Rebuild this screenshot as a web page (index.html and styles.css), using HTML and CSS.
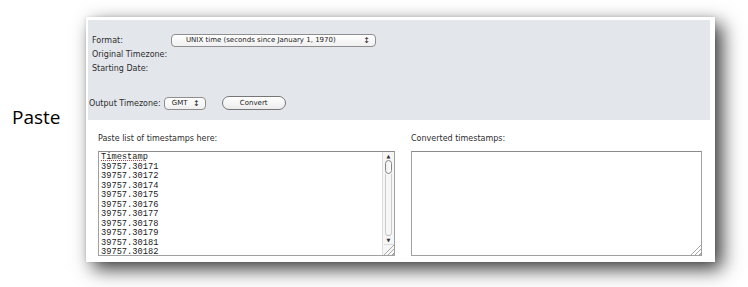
FILE: index.html
```html
<!DOCTYPE html>
<html lang="en">
<head>
  <meta charset="UTF-8">
  <title>Timestamp Converter</title>
  <link rel="stylesheet" href="styles.css">
</head>
<body>
  <div class="page">
    <div class="side">Paste</div>

    <div class="shot">
      <div class="options">
        <div class="row">
          <span class="lbl">Format:</span>
          <span class="select wide">UNIX time (seconds since January 1, 1970)<span class="arrows">&#x2195;</span></span>
        </div>
        <div class="row"><span class="lbl">Original Timezone:</span></div>
        <div class="row"><span class="lbl">Starting Date:</span></div>
        <div class="row out">
          <span>Output Timezone:</span>
          <span class="select small">GMT<span class="arrows">&#x2195;</span></span>
          <span class="btn">Convert</span>
        </div>
      </div>

      <div class="io">
        <div class="col left">
          <div class="cap">Paste list of timestamps here:</div>
          <div class="box">
            <div class="lines">
              <div class="spell">Timestamp</div>
              <div>39757.30171</div>
              <div>39757.30172</div>
              <div>39757.30174</div>
              <div>39757.30175</div>
              <div>39757.30176</div>
              <div>39757.30177</div>
              <div>39757.30178</div>
              <div>39757.30179</div>
              <div>39757.30181</div>
              <div>39757.30182</div>
            </div>
            <div class="scroll">
              <span class="arr">&#9650;</span>
              <span class="thumb"></span>
              <span class="track"></span>
              <span class="arr">&#9660;</span>
              <span class="grip"></span>
            </div>
          </div>
        </div>
        <div class="col right">
          <div class="cap">Converted timestamps:</div>
          <div class="box empty">
            <span class="grip"></span>
          </div>
        </div>
      </div>
    </div>
  </div>
</body>
</html>
```

FILE: styles.css
```css
body {
  margin: 0;
  background: #fff;
  font-family: "DejaVu Sans", sans-serif;
}

.page {
  display: flex;
  align-items: flex-start;
  width: 748px;
  height: 287px;
  overflow: hidden;
}

.side {
  width: 86px;
  padding: 104px 0 0 12px;
  box-sizing: border-box;
  font-family: "Open Sans", sans-serif;
  font-size: 19px;
  color: #000;
}

.shot {
  margin-top: 17px;
  width: 629px;
  height: 245px;
  background: #fff;
  box-shadow: 7px 7px 18px rgba(0, 0, 0, 0.78), 0 0 3px rgba(0, 0, 0, 0.12);
  padding: 3px 5px 0 2px;
  box-sizing: border-box;
}

.options {
  background: #e3e7eb;
  height: 100px;
  padding: 13px 0 0 4px;
  box-sizing: border-box;
  font-size: 8px;
  color: #2e2e2e;
}

.row {
  display: flex;
  align-items: center;
  height: 14px;
}

.lbl {
  width: 79px;
}

.row.out {
  margin: 21px 0 0 -3px;
  gap: 3px;
}

.select {
  position: relative;
  display: inline-flex;
  align-items: center;
  height: 13px;
  box-sizing: border-box;
  border: 1px solid #8e8e8e;
  border-radius: 4px;
  background: linear-gradient(#fff, #f0f0f0);
  font-size: 7px;
  color: #1a1a1a;
  padding-left: 14px;
}

.select.wide {
  width: 205px;
}

.select.small {
  width: 42px;
  padding-left: 7px;
}

.arrows {
  position: absolute;
  right: 5px;
  top: 0;
  font-size: 8px;
  line-height: 11px;
}

.btn {
  margin-left: 13px;
  width: 64px;
  height: 14px;
  box-sizing: border-box;
  border: 1px solid #777;
  border-radius: 7px;
  background: linear-gradient(#fff, #ececec);
  text-align: center;
  font-size: 7px;
  line-height: 12px;
  color: #1a1a1a;
}

.io {
  display: flex;
  gap: 16px;
  padding: 14px 0 0 10px;
}

.cap {
  font-size: 8px;
  color: #2e2e2e;
  height: 10px;
  line-height: 10px;
  margin-bottom: 7px;
}

.left {
  width: 297px;
}

.right {
  width: 291px;
}

.box {
  position: relative;
  height: 105px;
  border: 1px solid #a0a0a0;
  border-top-color: #8a8a8a;
  box-sizing: border-box;
  background: #fff;
  display: flex;
}

.lines {
  flex: 1;
  padding: 1px 0 0 2px;
  font-family: "Liberation Mono", monospace;
  font-size: 8.7px;
  line-height: 9.5px;
  color: #1a1a1a;
}

.spell {
  text-decoration: underline dotted #e03030;
  text-underline-offset: 1px;
}

.scroll {
  width: 11px;
  display: flex;
  flex-direction: column;
  align-items: center;
  border-left: 1px solid #ddd;
  background: #f6f6f6;
}

.arr {
  font-size: 5px;
  line-height: 8px;
  color: #333;
}

.thumb {
  width: 7px;
  height: 14px;
  border: 1px solid #888;
  border-radius: 4px;
  background: linear-gradient(90deg, #eee, #fff);
  box-sizing: border-box;
}

.track {
  flex: 1;
  width: 7px;
  border-left: 1px solid #ccc;
  border-right: 1px solid #ccc;
  border-bottom: 1px solid #bbb;
  border-radius: 0 0 4px 4px;
  box-sizing: border-box;
}

.scroll .arr:last-of-type {
  margin-bottom: 1px;
}

.grip {
  width: 10px;
  height: 10px;
  border-top: 1px solid #ddd;
  background: linear-gradient(135deg, transparent 45%, #aaa 46%, #aaa 52%, transparent 53%, transparent 65%, #aaa 66%, #aaa 72%, transparent 73%, transparent 85%, #aaa 86%);
}

.box.empty .grip {
  position: absolute;
  right: 0;
  bottom: 0;
  border-top: none;
}
```
